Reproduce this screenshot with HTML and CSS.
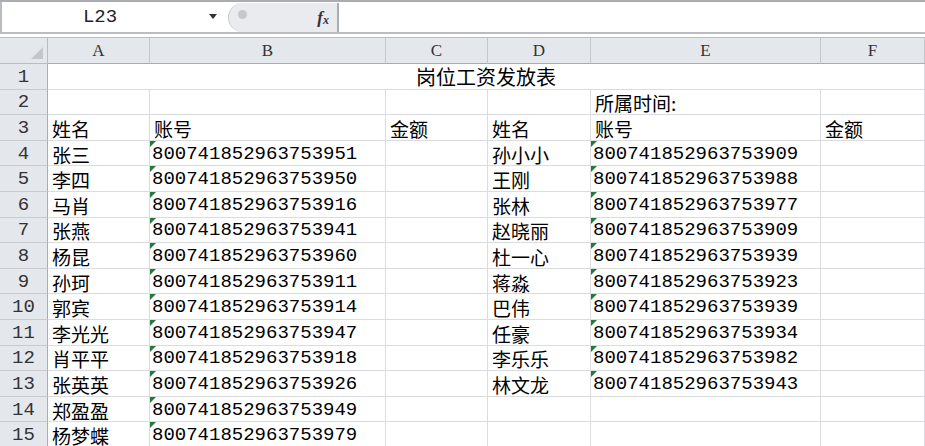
FILE: index.html
```html
<!DOCTYPE html>
<html lang="zh-CN">
<head>
    <meta charset="UTF-8">
    <title>岗位工资发放表</title>
    <link rel="stylesheet" href="styles.css">
</head>
<body>
    <div class="topline"></div>
    <div class="formula-bar">
        <div class="name-box">L23</div>
        <div class="name-arrow"></div>
        <div class="fx-box">
            <span class="fx-knob"></span>
            <span class="fx">f<sub>x</sub></span>
        </div>
        <div class="formula-input"></div>
    </div>
    <div class="gap"></div>

    <div class="sheet">
        <!-- column headers -->
        <div class="corner"><span class="corner-tri"></span></div>
        <div class="col-head">A</div>
        <div class="col-head">B</div>
        <div class="col-head">C</div>
        <div class="col-head">D</div>
        <div class="col-head">E</div>
        <div class="col-head">F</div>

        <!-- row 1 -->
        <div class="row-head">1</div>
        <div class="cell title">岗位工资发放表</div>

        <!-- row 2 -->
        <div class="row-head">2</div>
        <div class="cell"></div>
        <div class="cell"></div>
        <div class="cell"></div>
        <div class="cell"></div>
        <div class="cell">所属时间:</div>
        <div class="cell"></div>

        <!-- row 3 -->
        <div class="row-head">3</div>
        <div class="cell">姓名</div>
        <div class="cell">账号</div>
        <div class="cell">金额</div>
        <div class="cell">姓名</div>
        <div class="cell">账号</div>
        <div class="cell">金额</div>

        <div class="row-head">4</div>
        <div class="cell">张三</div>
        <div class="cell num">800741852963753951</div>
        <div class="cell"></div>
        <div class="cell">孙小小</div>
        <div class="cell num">800741852963753909</div>
        <div class="cell"></div>

        <div class="row-head">5</div>
        <div class="cell">李四</div>
        <div class="cell num">800741852963753950</div>
        <div class="cell"></div>
        <div class="cell">王刚</div>
        <div class="cell num">800741852963753988</div>
        <div class="cell"></div>

        <div class="row-head">6</div>
        <div class="cell">马肖</div>
        <div class="cell num">800741852963753916</div>
        <div class="cell"></div>
        <div class="cell">张林</div>
        <div class="cell num">800741852963753977</div>
        <div class="cell"></div>

        <div class="row-head">7</div>
        <div class="cell">张燕</div>
        <div class="cell num">800741852963753941</div>
        <div class="cell"></div>
        <div class="cell">赵晓丽</div>
        <div class="cell num">800741852963753909</div>
        <div class="cell"></div>

        <div class="row-head">8</div>
        <div class="cell">杨昆</div>
        <div class="cell num">800741852963753960</div>
        <div class="cell"></div>
        <div class="cell">杜一心</div>
        <div class="cell num">800741852963753939</div>
        <div class="cell"></div>

        <div class="row-head">9</div>
        <div class="cell">孙珂</div>
        <div class="cell num">800741852963753911</div>
        <div class="cell"></div>
        <div class="cell">蒋淼</div>
        <div class="cell num">800741852963753923</div>
        <div class="cell"></div>

        <div class="row-head">10</div>
        <div class="cell">郭宾</div>
        <div class="cell num">800741852963753914</div>
        <div class="cell"></div>
        <div class="cell">巴伟</div>
        <div class="cell num">800741852963753939</div>
        <div class="cell"></div>

        <div class="row-head">11</div>
        <div class="cell">李光光</div>
        <div class="cell num">800741852963753947</div>
        <div class="cell"></div>
        <div class="cell">任豪</div>
        <div class="cell num">800741852963753934</div>
        <div class="cell"></div>

        <div class="row-head">12</div>
        <div class="cell">肖平平</div>
        <div class="cell num">800741852963753918</div>
        <div class="cell"></div>
        <div class="cell">李乐乐</div>
        <div class="cell num">800741852963753982</div>
        <div class="cell"></div>

        <div class="row-head">13</div>
        <div class="cell">张英英</div>
        <div class="cell num">800741852963753926</div>
        <div class="cell"></div>
        <div class="cell">林文龙</div>
        <div class="cell num">800741852963753943</div>
        <div class="cell"></div>

        <div class="row-head">14</div>
        <div class="cell">郑盈盈</div>
        <div class="cell num">800741852963753949</div>
        <div class="cell"></div>
        <div class="cell"></div>
        <div class="cell"></div>
        <div class="cell"></div>

        <div class="row-head">15</div>
        <div class="cell">杨梦蝶</div>
        <div class="cell num">800741852963753979</div>
        <div class="cell"></div>
        <div class="cell"></div>
        <div class="cell"></div>
        <div class="cell"></div>
    </div>
</body>
</html>
```

FILE: styles.css
```css
body {
    margin: 0;
    width: 925px;
    height: 446px;
    overflow: hidden;
    background: #fff;
    font-family: "Noto Sans CJK SC", sans-serif;
    color: #000;
}

.topline {
    height: 2px;
    background: #a9adb2;
}

/* Name box + formula bar */
.formula-bar {
    display: flex;
    height: 30px;
    border-left: 2px solid #b9bdc2;
    border-bottom: 2px solid #b9bdc2;
    background: #fff;
}

.name-box {
    width: 196px;
    display: flex;
    align-items: center;
    justify-content: center;
    font-family: "Liberation Mono", monospace;
    font-size: 19px;
    color: #222;
}

.name-arrow {
    width: 30px;
    position: relative;
}

.name-arrow::after {
    content: "";
    position: absolute;
    left: 11px;
    top: 12px;
    border-left: 4px solid transparent;
    border-right: 4px solid transparent;
    border-top: 5px solid #333;
}

.fx-box {
    width: 108px;
    margin-top: 1px;
    display: flex;
    align-items: center;
    justify-content: space-between;
    background: #e9ebee;
    border-radius: 15px 0 0 15px;
    border-left: 1px solid #c4c8cc;
    border-right: 2px solid #a9adb2;
}

.fx-knob {
    width: 9px;
    height: 9px;
    margin-left: 9px;
    margin-top: -6px;
    border-radius: 50%;
    background: #c6c8cb;
}

.fx {
    margin-right: 8px;
    font-family: "Liberation Serif", serif;
    font-style: italic;
    font-weight: bold;
    font-size: 17px;
    color: #333;
}

.fx sub {
    font-size: 12px;
    vertical-align: -1px;
}

.formula-input {
    flex: 1;
}

.gap {
    height: 3px;
}

/* Sheet grid */
.sheet {
    display: grid;
    grid-template-columns: 48px 102px 236px 102px 103px 230px 1fr;
    grid-template-rows: 26px repeat(15, 25.6px);
    border-top: 1px solid #b9bdc2;
}

.corner,
.col-head,
.row-head {
    background: #e4e7eb;
    color: #333;
    font-family: "Liberation Serif", serif;
    font-size: 17px;
    line-height: 1;
    display: flex;
    align-items: center;
    justify-content: center;
}

.corner {
    position: relative;
    border-right: 1px solid #b9bdc2;
    border-bottom: 1px solid #b9bdc2;
}

.corner-tri {
    position: absolute;
    right: 4px;
    bottom: 4px;
    border-left: 12px solid transparent;
    border-bottom: 12px solid #c3c7cb;
}

.col-head {
    border-right: 1px solid #c4c8cc;
    border-bottom: 1px solid #a9adb2;
}

.row-head {
    font-family: "Liberation Mono", monospace;
    font-size: 19px;
    padding-top: 2px;
    border-right: 1px solid #a9adb2;
    border-bottom: 1px solid #c8ccd0;
}

.cell {
    position: relative;
    display: flex;
    align-items: center;
    padding-left: 4px;
    font-size: 19px;
    line-height: 1;
    padding-top: 2px;
    white-space: nowrap;
    border-right: 1px solid #dadcdf;
    border-bottom: 1px solid #dadcdf;
}

.title {
    grid-column: 2 / 8;
    justify-content: center;
    padding-left: 0;
    font-size: 20px;
}

.num {
    padding-left: 2px;
    font-family: "Liberation Mono", monospace;
    font-size: 19px;
}

.num::before {
    content: "";
    position: absolute;
    left: 0;
    top: 0;
    border-top: 6px solid #237a38;
    border-right: 6px solid transparent;
}
```
